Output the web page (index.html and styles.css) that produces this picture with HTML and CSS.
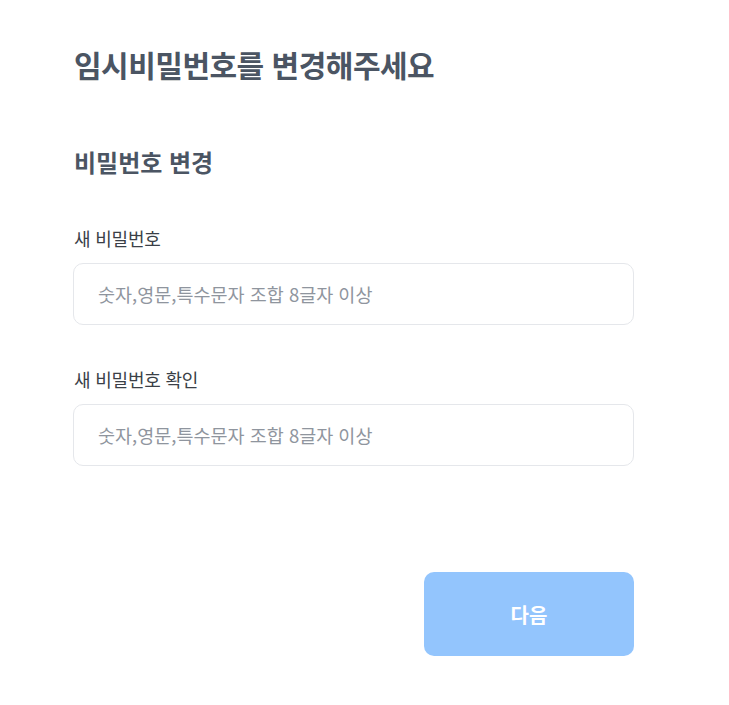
FILE: index.html
```html
<!DOCTYPE html>
<html lang="ko">
<head>
<meta charset="utf-8">
<link rel="stylesheet" href="styles.css">
</head>
<body>
<main class="page">
  <h1 class="title">임시비밀번호를 변경해주세요</h1>
  <h2 class="subtitle">비밀번호 변경</h2>
  <div class="field">
    <label class="label">새 비밀번호</label>
    <input class="input" type="password" placeholder="숫자,영문,특수문자 조합 8글자 이상">
  </div>
  <div class="field">
    <label class="label">새 비밀번호 확인</label>
    <input class="input" type="password" placeholder="숫자,영문,특수문자 조합 8글자 이상">
  </div>
  <div class="actions">
    <button class="next" type="button">다음</button>
  </div>
</main>
</body>
</html>
```

FILE: styles.css
```css
* { box-sizing: border-box; }
html, body { margin: 0; padding: 0; background: #fff; }
body {
  font-family: "Noto Sans CJK KR", "Noto Sans", sans-serif;
  color: #374151;
}
.page {
  width: 560px;
  margin-left: 74px;
  padding-top: 39px;
  display: flex;
  flex-direction: column;
}
.title {
  margin: 0;
  font-size: 30px;
  line-height: 50px;
  font-weight: 700;
  color: #4b5563;
  letter-spacing: -0.5px;
}
.subtitle {
  margin: 56px 0 0;
  font-size: 24px;
  line-height: 34px;
  font-weight: 700;
  color: #4b5563;
}
.field {
  margin-top: 46px;
  display: flex;
  flex-direction: column;
}
.field + .field { margin-top: 41px; }
.label {
  font-size: 18px;
  line-height: 26px;
  color: #3a3f47;
  margin-bottom: 12px;
  letter-spacing: -0.2px;
}
.input {
  height: 62px;
  width: 561px;
  margin-left: -1px;
  border: 1px solid #e5e7eb;
  border-radius: 10px;
  padding: 0 24px;
  font-family: inherit;
  font-size: 18.5px;
  color: #374151;
  outline: none;
}
.input::placeholder { color: #8f959e; }
.actions {
  margin-top: 106px;
  display: flex;
  justify-content: flex-end;
}
.next {
  width: 210px;
  height: 84px;
  border: none;
  border-radius: 10px;
  background: #93c5fd;
  color: #fff;
  font-family: inherit;
  font-size: 20px;
  font-weight: 700;
}
```
